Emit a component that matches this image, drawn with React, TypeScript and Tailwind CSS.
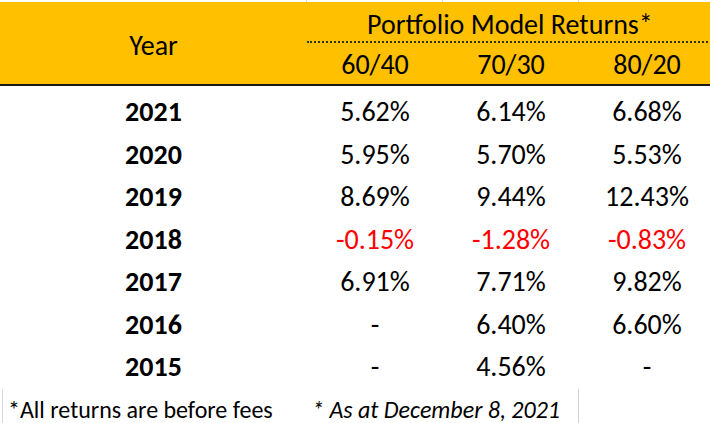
const FONT = { fontFamily: "Carlito, Lato, 'Open Sans', sans-serif" };

type Row = { year: string; vals: string[] };

const ROWS: Row[] = [
  { year: "2021", vals: ["5.62%", "6.14%", "6.68%"] },
  { year: "2020", vals: ["5.95%", "5.70%", "5.53%"] },
  { year: "2019", vals: ["8.69%", "9.44%", "12.43%"] },
  { year: "2018", vals: ["-0.15%", "-1.28%", "-0.83%"] },
  { year: "2017", vals: ["6.91%", "7.71%", "9.82%"] },
  { year: "2016", vals: ["-", "6.40%", "6.60%"] },
  { year: "2015", vals: ["-", "4.56%", "-"] },
];

export default function App() {
  return (
    <div className="w-[710px] h-[423px] overflow-hidden bg-white text-black" style={FONT}>
      {/* grid lines above the header */}
      <div className="flex h-[2px]">
        <div className="w-[307px] border-r border-[#d9d9d9]" />
        <div className="w-[136px] border-r border-[#d9d9d9]" />
        <div className="w-[136px] border-r border-[#d9d9d9]" />
        <div className="flex-1" />
      </div>

      <div className="flex h-[84px] bg-[#ffc000] border-b-2 border-[#1a1a1a]">
        <div className="w-[307px] shrink-0 flex items-center justify-center pt-[5px] text-[28px]">Year</div>
        <div className="flex-1 flex flex-col">
          <div className="h-[41px] border-b-2 border-dotted border-[#333] flex items-center pl-[60px] pt-[6px] text-[28px]">
            Portfolio Model Returns*
          </div>
          <div className="flex-1 flex text-[28px]">
            <div className="w-[136px] flex items-center justify-center pt-[1px]">60/40</div>
            <div className="w-[136px] flex items-center justify-center pt-[1px]">70/30</div>
            <div className="w-[136px] flex items-center justify-center pt-[1px]">80/20</div>
          </div>
        </div>
      </div>

      <div className="pt-[5px]">
        {ROWS.map((r) => (
          <div key={r.year} className="flex h-[42.5px] items-center text-[28px]">
            <div className="w-[307px] shrink-0 text-center font-bold">{r.year}</div>
            {r.vals.map((v, i) => (
              <div
                key={i}
                className={`w-[136px] shrink-0 text-center ${v.startsWith("-") && v.length > 1 ? "text-[#ff0000]" : ""}`}
              >
                {v}
              </div>
            ))}
          </div>
        ))}
      </div>

      <div className="flex h-[36px] items-center text-[24px]">
        <div className="w-[305px] shrink-0 h-full flex items-center pl-[5px] pt-[6px] border-l border-[#d9d9d9] ml-[2px]">
          *All returns are before fees
        </div>
        <div className="w-[272px] shrink-0 h-full flex items-center pl-[5px] pt-[6px] italic border-r border-[#d0d0d0]">
          * As at December 8, 2021
        </div>
        <div className="flex-1" />
      </div>
    </div>
  );
}
